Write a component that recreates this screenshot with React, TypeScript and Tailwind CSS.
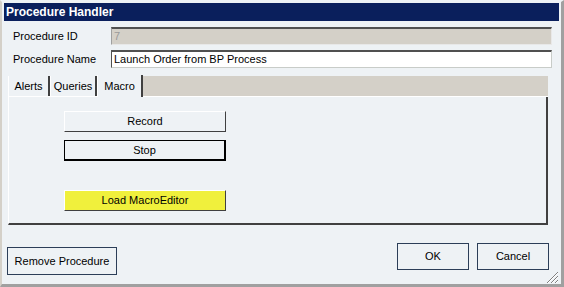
import React from "react";

const font = { fontFamily: '"Liberation Sans", Arial, sans-serif' };

function RaisedButton({ label, className = "" }: { label: string; className?: string }) {
  return (
    <div
      className={`flex items-center justify-center h-[21px] w-[162px] border border-t-white border-l-white border-r-[#404040] border-b-[#404040] text-[11px] text-black ${className}`}
    >
      {label}
    </div>
  );
}

export default function App() {
  return (
    <div
      style={font}
      className="w-[564px] h-[287px] bg-[#d4d0c8] flex flex-col overflow-hidden"
    >
      <div className="flex-1 flex flex-col bg-[#eef2f5] border-l-[2px] border-t-[2px] border-r-[3px] border-b-[3px] border-l-[#d4d0c8] border-t-[#eef2f5] border-r-[#a0a0a0] border-b-[#a0a0a0] px-[2px] pt-[1px]">
        {/* Title bar */}
        <div className="h-[18px] bg-[#0a1f5c] text-white font-bold text-[12px] flex items-center pl-[2px] shrink-0">
          Procedure Handler
        </div>

        {/* Fields */}
        <div className="flex flex-col gap-[5px] mt-[6px] pl-[9px] pr-[7px]">
          <div className="flex items-center">
            <div className="w-[98px] text-[11px] text-black">Procedure ID</div>
            <div className="flex-1 h-[18px] bg-[#d4d0c8] border-t-2 border-t-[#505050] border-l border-l-[#a0a0a0] border-r border-r-[#e8e8e8] border-b border-b-[#e8e8e8] text-[11px] text-[#9a9a9a] flex items-center pl-[2px]">
              7
            </div>
          </div>
          <div className="flex items-center">
            <div className="w-[98px] text-[11px] text-black">Procedure Name</div>
            <div className="flex-1 h-[18px] bg-white border-t-2 border-t-[#505050] border-l border-l-[#505050] border-r border-r-[#c8ccc8] border-b border-b-[#c8ccc8] text-[11px] text-black flex items-center pl-[2px]">
              Launch Order from BP Process
            </div>
          </div>
        </div>

        {/* Tabs */}
        <div className="mt-[8px] ml-[4px] mr-[11px] flex flex-col">
          <div className="h-[21px] bg-[#d4d0c8] flex items-end border-b border-b-white">
            <div className="h-[20px] w-[42px] bg-[#eef2f5] border-l border-l-white border-r-2 border-r-[#404040] text-[11px] flex items-center justify-center">
              Alerts
            </div>
            <div className="h-[20px] w-[47px] bg-[#eef2f5] border-l border-l-white border-r-2 border-r-[#404040] text-[11px] flex items-center justify-center">
              Queries
            </div>
            <div className="h-[22px] w-[46px] bg-[#eef2f5] border-l border-l-white border-r-2 border-r-[#404040] text-[11px] flex items-start justify-center pt-[3px] -mb-[1px]">
              Macro
            </div>
          </div>
          <div className="h-[128px] border-l border-l-white border-r-2 border-r-[#404040] border-b-2 border-b-[#404040] bg-[#eef2f5] flex flex-col pl-[55px] pt-[14px]">
            <RaisedButton label="Record" />
            <RaisedButton
              label="Stop"
              className="mt-[8px] !border-black !border-r-2 !border-b-2"
            />
            <RaisedButton label="Load MacroEditor" className="mt-[29px] bg-[#f0f03c]" />
          </div>
        </div>

        {/* Bottom buttons */}
        <div className="flex-1 flex items-start justify-between pl-[3px] pr-[10px] relative">
          <div className="mt-[22px] h-[28px] w-[110px] border border-[#2c3e58] text-[11px] flex items-center justify-center">
            Remove Procedure
          </div>
          <div className="flex gap-[8px] mt-[18px]">
            <div className="h-[27px] w-[72px] border border-[#2c3e58] text-[11px] flex items-center justify-center">
              OK
            </div>
            <div className="h-[27px] w-[72px] border border-[#2c3e58] text-[11px] flex items-center justify-center">
              Cancel
            </div>
          </div>
          <svg
            className="absolute right-0 bottom-0"
            width="13"
            height="13"
            viewBox="0 0 13 13"
          >
            <g stroke="#808080" strokeWidth="1">
              <line x1="12" y1="1" x2="1" y2="12" />
              <line x1="12" y1="5" x2="5" y2="12" />
              <line x1="12" y1="9" x2="9" y2="12" />
            </g>
            <g stroke="#ffffff" strokeWidth="1">
              <line x1="12" y1="2" x2="2" y2="12" />
              <line x1="12" y1="6" x2="6" y2="12" />
              <line x1="12" y1="10" x2="10" y2="12" />
            </g>
          </svg>
        </div>
      </div>
    </div>
  );
}
